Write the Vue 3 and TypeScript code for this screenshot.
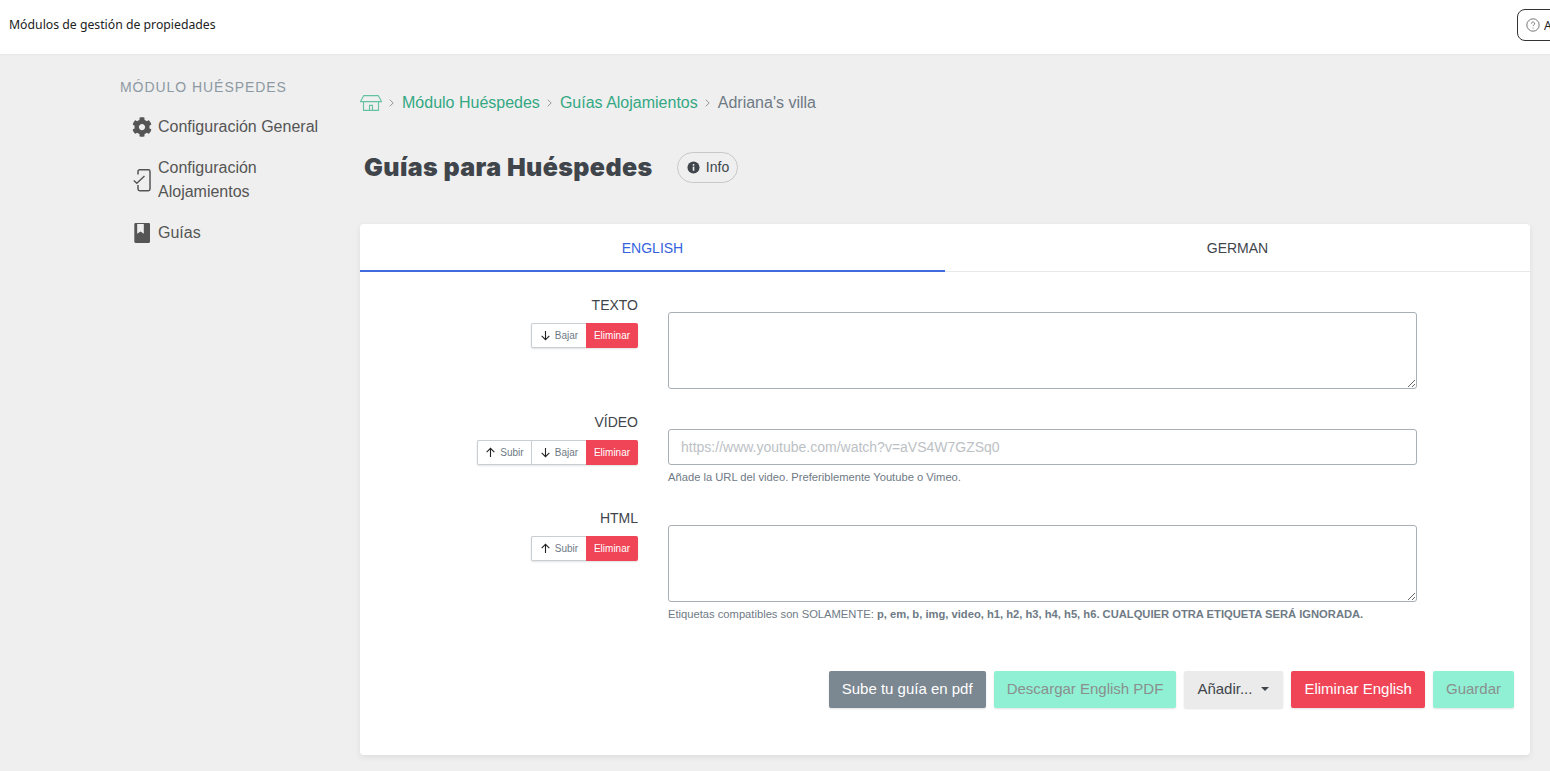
<script setup lang="ts">
interface Row { label: string; up: boolean; down: boolean; kind: 'area' | 'input'; }
const rows: Row[] = [
  { label: 'TEXTO', up: false, down: true, kind: 'area' },
  { label: 'VÍDEO', up: true, down: true, kind: 'input' },
  { label: 'HTML', up: true, down: false, kind: 'area' },
];
</script>

<template>
  <div class="page">
    <header class="topbar">
      <span class="brand">Módulos de gestión de propiedades</span>
      <div class="help">
        <svg class="help-ico" viewBox="0 0 14 14" width="14" height="14">
          <circle cx="7" cy="7" r="6.2" fill="none" stroke="#555" stroke-width="0.8" />
          <path d="M5.4 5.6a1.6 1.6 0 1 1 2.4 1.4c-.5.3-.8.6-.8 1.1" fill="none" stroke="#555" stroke-width="0.8" />
          <circle cx="7" cy="10" r="0.5" fill="#555" />
        </svg>
        <span>Ayuda</span>
      </div>
    </header>
    <div class="body">
      <aside class="side">
        <div class="side-title">MÓDULO HUÉSPEDES</div>
        <ul class="menu">
          <li class="item">
            <svg class="mi" viewBox="0 0 512 512" width="20" height="20"><path fill="#555" d="M487.4 315.7l-42.6-24.6c4.3-23.2 4.3-47 0-70.2l42.6-24.6c4.9-2.8 7.1-8.6 5.5-14-11.1-35.6-30-67.8-54.7-94.6-3.8-4.1-10-5.1-14.8-2.3L380.8 110c-17.9-15.4-38.5-27.3-60.8-35.1V25.8c0-5.6-3.9-10.5-9.4-11.7-36.7-8.2-74.3-7.8-109.2 0-5.5 1.2-9.4 6.1-9.4 11.7V75c-22.2 7.9-42.8 19.8-60.8 35.1L88.7 85.5c-4.9-2.8-11-1.9-14.8 2.3-24.7 26.7-43.6 58.9-54.7 94.6-1.7 5.4.6 11.2 5.5 14L67.3 221c-4.3 23.2-4.3 47 0 70.2l-42.6 24.6c-4.9 2.8-7.1 8.6-5.500 14 11.100 35.600 30 67.800 54.700 94.600 3.800 4.100 10 5.100 14.800 2.300l42.600-24.600c17.900 15.400 38.500 27.300 60.800 35.100v49.200c0 5.600 3.900 10.500 9.400 11.700 36.700 8.200 74.300 7.800 109.200 0 5.500-1.200 9.400-6.100 9.400-11.700v-49.200c22.200-7.900 42.800-19.800 60.800-35.100l42.600 24.600c4.900 2.800 11 1.900 14.800-2.300 24.700-26.700 43.600-58.900 54.700-94.600 1.500-5.500-.7-11.300-5.600-14.100zM256 336c-44.100 0-80-35.900-80-80s35.900-80 80-80 80 35.900 80 80-35.900 80-80 80z"/></svg>
            <span>Configuración General</span>
          </li>
          <li class="item item-two">
            <svg class="mi" viewBox="0 0 20 24" width="20" height="24"><path fill="none" stroke="#555" stroke-width="1.5" stroke-linejoin="round" d="M6 6.500V3.500c0-1 .7-1.700 1.700-1.700h8.600c1 0 1.700.7 1.700 1.700v17.500c0 1-.7 1.700-1.700 1.700H7.700c-1 0-1.700-.7-1.700-1.700v-4"/><path fill="none" stroke="#555" stroke-width="1.4" d="M1.800 12.500l3 2.700 7.700-7.200"/></svg>
            <span>Configuración Alojamientos</span>
          </li>
          <li class="item">
            <svg class="mi" viewBox="0 0 20 20" width="20" height="20"><path fill="#555" fill-rule="evenodd" d="M3.600 0h13.200c.7 0 1.200.5 1.200 1.200v17.600c0 .7-.5 1.200-1.200 1.200H3.600C2.800 20 2.300 19.400 2.300 18.600V1.400C2.300.6 2.800 0 3.600 0zM5.200 1v9.800l3.300-2.200 3.300 2.200V1z"/></svg>
            <span>Guías</span>
          </li>
        </ul>
      </aside>
      <main class="main">
        <nav class="crumbs">
          <svg class="home" viewBox="0 0 22 16" width="22" height="16">
            <path fill="none" stroke="#62c2a2" stroke-width="1.1" stroke-linejoin="round" d="M3.800.6h14.400l3.300 6H.5zM3.500 6.600v8.800h15V6.600M9.500 15.400v-5h3v5" />
          </svg>
          <svg class="sep" viewBox="0 0 5 8" width="5" height="8"><path fill="none" stroke="#8f8f8f" stroke-width="0.9" d="M.7.700L4.200 4 .7 7.300"/></svg>
          <a class="link">Módulo Huéspedes</a>
          <svg class="sep" viewBox="0 0 5 8" width="5" height="8"><path fill="none" stroke="#8f8f8f" stroke-width="0.9" d="M.7.700L4.200 4 .7 7.300"/></svg>
          <a class="link">Guías Alojamientos</a>
          <svg class="sep" viewBox="0 0 5 8" width="5" height="8"><path fill="none" stroke="#8f8f8f" stroke-width="0.9" d="M.7.700L4.200 4 .7 7.300"/></svg>
          <span class="cur">Adriana's villa</span>
        </nav>
        <div class="title-row">
          <h1 class="title">Guías para Huéspedes</h1>
          <button class="info" type="button">
            <svg viewBox="0 0 14 14" width="13" height="13"><circle cx="7" cy="7" r="6.500" fill="#3f454b"/><rect x="6.200" y="6" width="1.700" height="4.500" fill="#f0f0f0"/><rect x="6.200" y="3.300" width="1.700" height="1.700" fill="#f0f0f0"/></svg>
            <span>Info</span>
          </button>
        </div>
        <section class="card">
          <div class="tabs">
            <div class="tab tab-on">ENGLISH</div>
            <div class="tab">GERMAN</div>
          </div>
          <div class="form">
            <div v-for="r in rows" :key="r.label" class="row">
              <div class="left">
                <label class="lab">{{ r.label }}</label>
                <div class="group">
                  <button v-if="r.up" class="mini" :class="{ narrow: r.down }" type="button">
                    <svg viewBox="0 0 12 12" width="11" height="11"><path fill="none" stroke="#222" stroke-width="1.200" d="M6 11V1.500M1.800 5.500L6 1.500l4.200 4"/></svg>
                    <span>Subir</span>
                  </button>
                  <button v-if="r.down" class="mini" type="button">
                    <svg viewBox="0 0 12 12" width="11" height="11"><path fill="none" stroke="#222" stroke-width="1.200" d="M6 1v9.500M1.800 6.500L6 10.500l4.200-4"/></svg>
                    <span>Bajar</span>
                  </button>
                  <button class="mini del" type="button">Eliminar</button>
                </div>
              </div>
              <div class="right">
                <template v-if="r.label === 'TEXTO'">
                  <textarea class="area"></textarea>
                </template>
                <template v-else-if="r.label === 'VÍDEO'">
                  <input class="inp" type="text" placeholder="https://www.youtube.com/watch?v=aVS4W7GZSq0" />
                  <p class="hint">Añade la URL del video. Preferiblemente Youtube o Vimeo.</p>
                </template>
                <template v-else>
                  <textarea class="area"></textarea>
                  <p class="hint">Etiquetas compatibles son SOLAMENTE: <b>p, em, b, img, video, h1, h2, h3, h4, h5, h6. CUALQUIER OTRA ETIQUETA SERÁ IGNORADA.</b></p>
                </template>
              </div>
            </div>
          </div>
          <div class="actions">
            <button class="btn gray" type="button">Sube tu guía en pdf</button>
            <button class="btn mint" type="button">Descargar English PDF</button>
            <button class="btn light" type="button">Añadir...<i class="caret"></i></button>
            <button class="btn red" type="button">Eliminar English</button>
            <button class="btn mint" type="button">Guardar</button>
          </div>
        </section>
      </main>
    </div>
  </div>
</template>

<style>
html, body { margin: 0; background: #efefef; overflow: hidden; }
</style>

<style scoped>
.page { width: 1550px; height: 771px; overflow: hidden; background: #efefef; font-family: "Liberation Sans", Arial, sans-serif; color: #3f454b; }
.topbar { height: 54px; background: #fff; display: flex; align-items: center; justify-content: space-between; padding-left: 9px; box-sizing: border-box; overflow: hidden; box-shadow: 0 1px 1px rgba(0,0,0,.03); }
.brand { font-family: "Noto Sans", sans-serif; font-size: 12.25px; color: #222; position: relative; top: -3px; }
.help { flex: none; width: 80px; margin-right: -47px; height: 32px; box-sizing: border-box; border: 1px solid #333; border-radius: 8px; display: flex; align-items: center; gap: 4px; padding-left: 8px; font-family: "Noto Sans", sans-serif; font-size: 12px; color: #222; position: relative; top: -2px; }
.help-ico { flex: none; }
.help span { white-space: nowrap; }
.body { display: flex; }
.side { width: 360px; flex: none; box-sizing: border-box; padding: 25px 0 0 120px; }
.side-title { font-size: 14px; letter-spacing: .95px; color: #8d99a3; line-height: 16px; }
.menu { list-style: none; margin: 0; padding: 0 0 0 12px; }
.item { display: flex; align-items: center; gap: 6px; font-size: 16px; line-height: 24px; color: #555; margin-top: 17px; width: 200px; }
.item:first-child { margin-top: 20px; }
.item-two span { width: 130px; }
.mi { flex: none; }
.main { width: 1170px; flex: none; }
.crumbs { display: flex; align-items: center; height: 24px; margin-top: 37px; font-size: 16px; }
.home { flex: none; }
.sep { flex: none; margin: 0 8px 0 7px; }
.link { color: #33a883; }
.cur { color: #6e7a85; }
.title-row { display: flex; align-items: center; margin-top: 32px; padding-left: 4px; height: 40px; }
.title { margin: 0; font-family: Inter, sans-serif; font-weight: 900; font-size: 25px; color: #3f454b; letter-spacing: .4px; width: 289px; white-space: nowrap; }
.info { margin-left: 24px; height: 31px; width: 61px; border: 1px solid #c8c8c8; border-radius: 16px; background: transparent; display: flex; align-items: center; justify-content: center; gap: 6px; font-family: "Liberation Sans", sans-serif; font-size: 14px; color: #3f454b; padding: 0 0 0 1px; }
.card { margin-top: 37px; width: 1170px; height: 531px; background: #fff; border-radius: 4px; box-shadow: 0 2px 6px rgba(0,0,0,.08); box-sizing: border-box; }
.tabs { display: flex; height: 48px; border-bottom: 1px solid #e8e8e8; box-sizing: border-box; }
.tab { width: 585px; text-align: center; font-size: 14px; line-height: 48px; color: #3f454b; box-sizing: border-box; }
.tab-on { color: #3563e0; border-bottom: 2px solid #3f6ae0; height: 48px; }
.form { padding-top: 40px; }
.row { display: flex; margin-bottom: 40px; }
.left { width: 278px; flex: none; display: flex; flex-direction: column; align-items: flex-end; margin-top: -16px; }
.lab { font-size: 14px; line-height: 18px; color: #3f454b; }
.group { display: flex; margin-top: 9px; height: 25px; border-radius: 2px; box-shadow: 0 1px 2px rgba(0,0,0,.12); }
.mini { height: 25px; width: 55px; box-sizing: border-box; border: 1px solid #c9ced2; border-right: 0; background: #fff; font-family: "Liberation Sans", sans-serif; font-size: 10px; color: #6e7a85; display: flex; align-items: center; justify-content: center; gap: 4px; padding: 0; }
.mini.narrow { width: 54px; }
.mini:first-child { border-radius: 2px 0 0 2px; }
.mini.del { width: 52px; background: #f04557; color: #fff; border: 0; border-radius: 0 2px 2px 0; }
.right { width: 749px; margin-left: 30px; flex: none; }
.area { display: block; width: 749px; height: 77px; box-sizing: border-box; border: 1px solid #a8b0b6; border-radius: 3px; background: #fff; resize: vertical; margin: 0; outline: none; }
.inp { display: block; width: 749px; height: 36px; box-sizing: border-box; border: 1px solid #a8b0b6; border-radius: 3px; padding: 0 12px; font-family: "Liberation Sans", sans-serif; font-size: 14px; margin: 0; outline: none; }
.inp::placeholder { color: #bcc1c5; opacity: 1; }
.hint { margin: 4px 0 0; font-size: 11.2px; line-height: 16px; color: #6e7a85; }
.hint b { font-weight: 700; }
.row:nth-child(3) { margin-bottom: 0; }
.actions { display: flex; justify-content: flex-end; gap: 8px; padding-right: 16px; margin-top: 49px; }
.btn { height: 37px; border: 0; border-radius: 2px; font-family: "Liberation Sans", sans-serif; font-size: 15px; padding: 0 13px 2px; box-shadow: 0 1px 2px rgba(0,0,0,.12); white-space: nowrap; }
.gray { background: #7b8791; color: #fff; }
.mint { background: #90f0d4; color: #8a8f8e; }
.light { background: #ebebeb; color: #3f454b; display: flex; align-items: center; padding-right: 14px; }
.red { background: #f04557; color: #fff; }
.caret { display: inline-block; margin-left: 9px; margin-top: 1px; width: 0; height: 0; border-left: 4px solid transparent; border-right: 4px solid transparent; border-top: 4px solid #3f454b; }
</style>
